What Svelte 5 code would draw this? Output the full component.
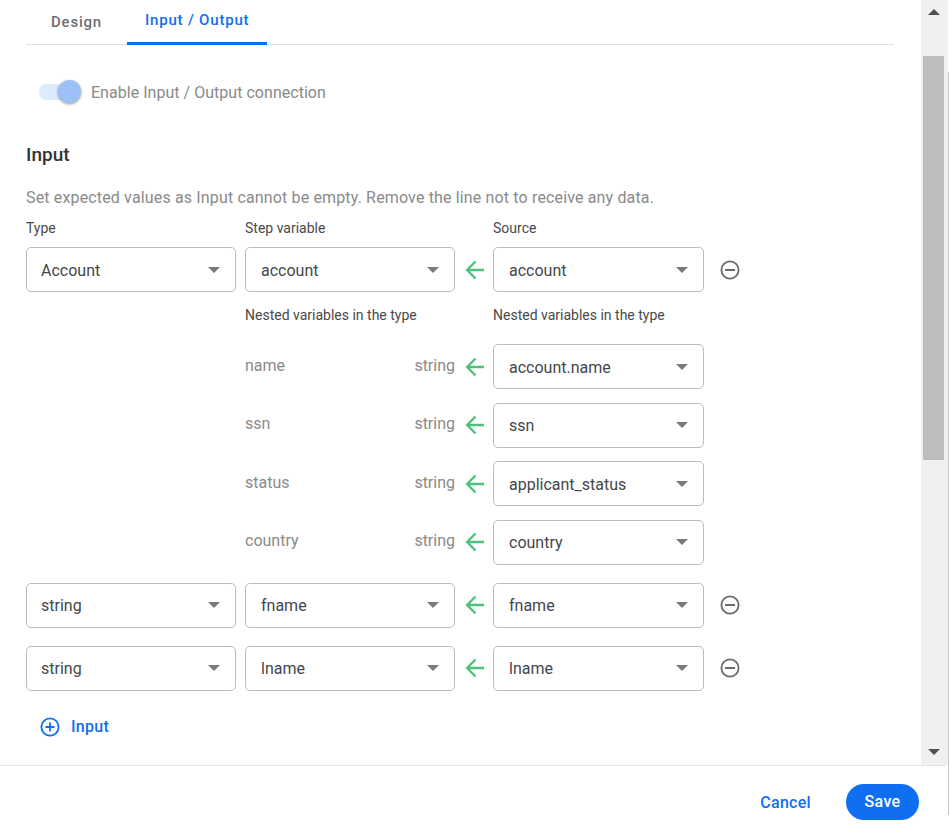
<script>
  const nested = [
    { name: 'name', source: 'account.name' },
    { name: 'ssn', source: 'ssn' },
    { name: 'status', source: 'applicant_status' },
    { name: 'country', source: 'country' }
  ];
  const simple = [
    { type: 'string', variable: 'fname', source: 'fname' },
    { type: 'string', variable: 'lname', source: 'lname' }
  ];
</script>

{#snippet select(value, cls = '')}
  <div class="select {cls}">
    <span>{value}</span>
    <i class="caret"></i>
  </div>
{/snippet}

{#snippet arrow()}
  <svg class="arrow" width="20" height="20" viewBox="0 0 20 20" fill="none" stroke="#4fc27a" stroke-width="2.4">
    <path d="M19 10H2.5M10.5 1.5L2.2 10l8.3 8.5" />
  </svg>
{/snippet}

{#snippet remove()}
  <svg class="remove" width="20" height="20" viewBox="0 0 20 20" fill="none" stroke="#6a6a6a" stroke-width="1.8">
    <circle cx="10" cy="10" r="8.6" />
    <path d="M5 10h10" stroke-width="2" />
  </svg>
{/snippet}

<div class="dialog">
  <div class="body">
    <div class="content">
      <nav class="tabs">
        <button class="tab">Design</button>
        <button class="tab active">Input / Output</button>
      </nav>

      <div class="toggle-row">
        <span class="toggle"><span class="knob"></span></span>
        <span>Enable Input / Output connection</span>
      </div>

      <h2>Input</h2>
      <p class="hint">Set expected values as Input cannot be empty. Remove the line not to receive any data.</p>

      <div class="grid labels">
        <span>Type</span>
        <span>Step variable</span>
        <span></span>
        <span>Source</span>
      </div>

      <div class="grid">
        {@render select('Account', 'first')}
        {@render select('account')}
        {@render arrow()}
        {@render select('account')}
        {@render remove()}
      </div>

      <div class="grid labels nested-labels">
        <span></span>
        <span>Nested variables in the type</span>
        <span></span>
        <span>Nested variables in the type</span>
      </div>

      <div class="nested">
        {#each nested as n}
          <div class="grid">
            <span></span>
            <div class="var"><span>{n.name}</span><span>string</span></div>
            {@render arrow()}
            {@render select(n.source)}
          </div>
        {/each}
      </div>

      <div class="simple">
        {#each simple as r}
          <div class="grid">
            {@render select(r.type, 'first')}
            {@render select(r.variable)}
            {@render arrow()}
            {@render select(r.source)}
            {@render remove()}
          </div>
        {/each}
      </div>

      <button class="add">
        <svg width="20" height="20" viewBox="0 0 20 20" fill="none" stroke="#0f6ff0" stroke-width="1.8">
          <circle cx="10" cy="10" r="8.6" />
          <path d="M10 5.5v9M5.5 10h9" />
        </svg>
        Input
      </button>
    </div>

    <div class="scrollbar">
      <i class="up"></i>
      <div class="track"><div class="thumb"></div></div>
      <i class="down"></i>
    </div>
  </div>

  <footer>
    <button class="cancel">Cancel</button>
    <button class="save">Save</button>
  </footer>
</div>

<style>
  :global(body) {
    margin: 0;
    background: #fff;
    font-family: Roboto, "Liberation Sans", sans-serif;
    color: #333;
  }
  button {
    font: inherit;
    background: none;
    border: 0;
    padding: 0;
    cursor: pointer;
  }
  .dialog {
    position: relative;
    width: 949px;
    height: 832px;
    display: flex;
    flex-direction: column;
    overflow: hidden;
  }
  .dialog::after {
    content: '';
    position: absolute;
    right: 0;
    top: 72px;
    width: 1px;
    height: 743px;
    background: #c8c8c8;
  }
  .body {
    height: 765px;
    display: flex;
    flex: none;
  }
  .content {
    width: 869px;
    flex: none;
    padding-left: 26px;
    overflow: hidden;
  }
  .tabs {
    width: 868px;
    height: 44px;
    display: flex;
    border-bottom: 1px solid #e0e0e0;
  }
  .tab {
    height: 44px;
    padding: 0 25px;
    font-size: 15px;
    font-weight: 500;
    letter-spacing: 0.8px;
    color: #6f6f6f;
  }
  .tab.active {
    color: #0f6ff0;
    height: 45px;
    box-sizing: border-box;
    padding: 0 18px 2px;
    border-bottom: 3px solid #0f6ff0;
    letter-spacing: 0.8px;
  }
  .toggle-row {
    display: flex;
    align-items: center;
    margin: 35px 0 0 13px;
    height: 24px;
    font-size: 16px;
    letter-spacing: 0.03px;
    color: #8a8a8a;
    gap: 16px;
  }
  .toggle {
    position: relative;
    width: 36px;
    height: 16px;
    border-radius: 8px;
    background: #deebfc;
  }
  .knob {
    position: absolute;
    right: -6px;
    top: -4px;
    width: 23px;
    height: 23px;
    border-radius: 50%;
    background: #9dc1f7;
    box-shadow: 0 1px 3px rgba(0, 0, 0, 0.4);
  }
  h2 {
    margin: 39px 0 0;
    font-size: 19px;
    line-height: 24px;
    font-weight: 500;
    color: #333;
  }
  .hint {
    margin: 20px 0 0;
    font-size: 16px;
    line-height: 22px;
    letter-spacing: 0.15px;
    color: #8a8a8a;
  }
  .grid {
    display: grid;
    grid-template-columns: 210px 219px 38px 211px 36px;
    align-items: center;
  }
  .grid > :global(:nth-child(2)) {
    margin-left: 9px;
    width: 210px;
  }
  .labels {
    height: 18px;
    margin: 10px 0 10px;
    font-size: 14px;
    color: #4a4a4a;
  }
  .nested-labels {
    margin: 14px 0 20px;
  }
  .select {
    height: 45px;
    box-sizing: border-box;
    border: 1px solid #bdbdbd;
    border-radius: 5px;
    display: flex;
    align-items: center;
    justify-content: space-between;
    padding: 0 15px;
    font-size: 16px;
    color: #44474c;
  }
  .select.first {
    padding-left: 14px;
  }
  .select span {
    padding-top: 1px;
  }
  .caret {
    width: 0;
    height: 0;
    border-left: 6px solid transparent;
    border-right: 6px solid transparent;
    border-top: 6px solid #7a7a7a;
  }
  .arrow {
    justify-self: center;
    margin-left: 2px;
  }
  .remove {
    justify-self: start;
    margin-left: 15.5px;
  }
  .var {
    display: flex;
    justify-content: space-between;
    font-size: 16px;
    color: #8a8a8a;
    margin-top: -3px;
  }
  .nested {
    display: flex;
    flex-direction: column;
    gap: 13.67px;
  }
  .simple {
    margin-top: 18px;
    display: flex;
    flex-direction: column;
    gap: 18px;
  }
  .add {
    display: flex;
    align-items: center;
    gap: 11px;
    margin: 26px 0 0 14px;
    height: 20px;
    font-size: 16px;
    font-weight: 500;
    letter-spacing: 0.3px;
    color: #0f6ff0;
  }
  .scrollbar {
    width: 27px;
    margin-left: 26px;
    background: #f0f0f0;
    display: flex;
    flex-direction: column;
    align-items: flex-start;
    padding-left: 7px;
    box-sizing: border-box;
  }
  .up, .down {
    width: 0;
    height: 0;
    border-left: 6px solid transparent;
    border-right: 6px solid transparent;
    flex: none;
  }
  .up {
    border-bottom: 6px solid #505050;
    margin: 9px 0 0;
  }
  .down {
    border-top: 6px solid #505050;
    margin: 0 0 10px;
  }
  .track {
    flex: 1;
    width: 21px;
    margin-left: -5px;
    padding-top: 41px;
  }
  .thumb {
    height: 404px;
    background: #bdbdbd;
  }
  footer {
    flex: 1;
    border-top: 1px solid #e5e5e5;
    display: flex;
    justify-content: flex-end;
    align-items: flex-start;
    padding: 18px 27px 0 0;
    margin-right: 3px;
  }
  .cancel {
    height: 36px;
    font-size: 16px;
    font-weight: 500;
    letter-spacing: 0.3px;
    color: #0f6ff0;
    margin-right: 35px;
  }
  .save {
    width: 73px;
    height: 36px;
    padding-bottom: 2px;
    border-radius: 18px;
    background: #0f6ff0;
    color: #fff;
    font-size: 16px;
    font-weight: 500;
    letter-spacing: 0.3px;
  }
</style>
